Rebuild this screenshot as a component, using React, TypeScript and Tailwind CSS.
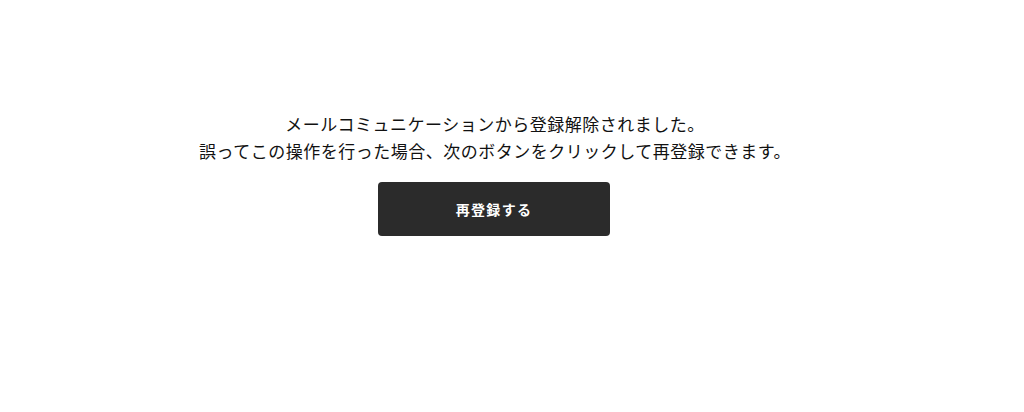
export default function App() {
    return (
        <div className="w-[1024px] h-[412px] bg-white font-['Noto_Sans_CJK_JP','Noto_Sans',sans-serif]">
            <div className="w-[990px] pt-[110px] flex flex-col items-center">
                <p className="text-[17px] leading-[27px] tracking-[0.5px] text-[#111] text-center">
                    メールコミュニケーションから登録解除されました。
                    <br />
                    誤ってこの操作を行った場合、次のボタンをクリックして再登録できます。
                </p>
                <button className="mt-[18px] mr-[2px] w-[232px] h-[54px] rounded-[4px] bg-[#2b2b2b] text-white text-[14px] font-bold tracking-[1.3px]">
                    再登録する
                </button>
            </div>
        </div>
    )
}
